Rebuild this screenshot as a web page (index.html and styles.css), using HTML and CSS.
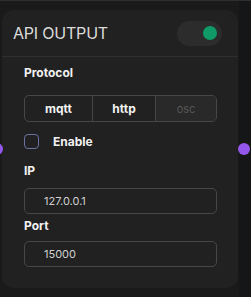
FILE: index.html
```html
<!DOCTYPE html>
<html lang="en">
<head>
<title>API Output</title>
<meta charset="utf-8">
<link rel="stylesheet" href="styles.css">
</head>
<body>

<div class="canvas">
  <div class="node">
    <header class="node-head">
      <span class="node-title">API OUTPUT</span>
      <span class="toggle"><span class="knob"></span></span>
    </header>

    <div class="node-body">
      <div class="label label-protocol">Protocol</div>
      <div class="segments">
        <span class="seg">mqtt</span>
        <span class="seg">http</span>
        <span class="seg seg-off">osc</span>
      </div>

      <label class="check">
        <span class="box"></span>
        <span>Enable</span>
      </label>

      <div class="label label-ip">IP</div>
      <div class="field">127.0.0.1</div>

      <div class="label label-port">Port</div>
      <div class="field field-port">15000</div>
    </div>

    <span class="handle handle-in"></span>
    <span class="handle handle-out"></span>
  </div>
  <div class="side"></div>
</div>

</body>
</html>
```

FILE: styles.css
```css
* {
  box-sizing: border-box;
}

body {
  margin: 0;
  background: #1a1a1a;
  font-family: Inter, "Liberation Sans", Arial, sans-serif;
  color: #e6e6e6;
  width: 251px;
  height: 297px;
  overflow: hidden;
}

.canvas {
  display: flex;
  height: 297px;
  border-top: 1px solid #2e2e2e;
}

.side {
  margin-left: auto;
  width: 12px;
  background: #151617;
}

/* the node card */
.node {
  position: relative;
  margin: 9px 0 0 2px;
  width: 236px;
  height: 278px;
  background: #212121;
  border-radius: 12px;
}

.node-head {
  display: flex;
  align-items: center;
  justify-content: space-between;
  height: 47px;
  padding: 0 16px 0 11px;
  border-bottom: 1px solid #303030;
}

.node-title {
  font-size: 16px;
  color: #dcdcdc;
  letter-spacing: -0.2px;
}

.toggle {
  display: flex;
  align-items: center;
  justify-content: flex-end;
  width: 45px;
  height: 25px;
  padding-right: 5px;
  border-radius: 13px;
  background: #2c2c2c;
}

.knob {
  width: 14px;
  height: 14px;
  border-radius: 50%;
  background: #0f9a68;
}

.node-body {
  padding: 0 21px 0 22px;
}

.label {
  font-size: 12px;
  font-weight: 700;
  color: #f2f2f2;
  line-height: 15px;
}

.label-protocol {
  margin-top: 8px;
}

.label-ip {
  margin-top: 14px;
}

.label-port {
  margin-top: 4px;
}

/* segmented control */
.segments {
  display: flex;
  margin-top: 15px;
  height: 27px;
  border: 1px solid #474747;
  border-radius: 5px;
  overflow: hidden;
}

.seg {
  display: flex;
  align-items: center;
  justify-content: center;
  font-size: 12px;
  font-weight: 700;
  color: #f2f2f2;
  border-right: 1px solid #474747;
}

.seg:nth-child(1) {
  width: 68px;
}

.seg:nth-child(2) {
  width: 63px;
}

.seg-off {
  flex: 1;
  border-right: 0;
  background: #292929;
  color: #555;
  font-weight: 400;
  font-size: 11px;
}

.check {
  display: flex;
  align-items: center;
  gap: 14px;
  margin-top: 12px;
  height: 15px;
  font-size: 12px;
  font-weight: 700;
  color: #f2f2f2;
}

.box {
  width: 15px;
  height: 15px;
  border: 1.5px solid #6a71a3;
  border-radius: 4px;
}

.field {
  margin-top: 10px;
  height: 26px;
  padding-left: 19px;
  display: flex;
  align-items: center;
  font-size: 11px;
  color: #d0d0d0;
  border: 1.5px solid #474747;
  border-radius: 5px;
}

.field-port {
  margin-top: 8px;
}

/* connection handles sit on the card edge */
.handle {
  position: absolute;
  top: 133px;
  width: 12px;
  height: 12px;
  border-radius: 50%;
  background: #9457eb;
}

.handle-in {
  left: -11px;
}

.handle-out {
  right: -12px;
}
```
